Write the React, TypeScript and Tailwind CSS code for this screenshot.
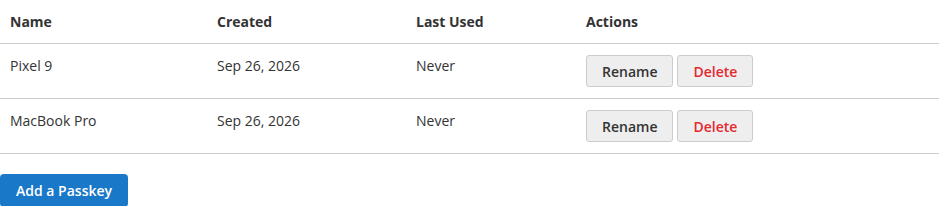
import React from "react";

const rows = [
  { name: "Pixel 9", created: "Sep 26, 2026", last: "Never" },
  { name: "MacBook Pro", created: "Sep 26, 2026", last: "Never" },
];

export default function App() {
  return (
    <div className="w-[939px] bg-white text-[14px] text-[#333]" style={{ fontFamily: '"Open Sans", sans-serif' }}>
      <table className="w-full table-fixed border-collapse">
        <colgroup>
          <col className="w-[207px]" />
          <col className="w-[199px]" />
          <col className="w-[170px]" />
          <col />
        </colgroup>
        <thead>
          <tr className="border-b border-[#ccc]">
            <th className="px-[10px] py-[11px] text-left font-bold leading-[21px]">Name</th>
            <th className="px-[10px] py-[11px] text-left font-bold leading-[21px]">Created</th>
            <th className="px-[10px] py-[11px] text-left font-bold leading-[21px]">Last Used</th>
            <th className="px-[10px] py-[11px] text-left font-bold leading-[21px]">Actions</th>
          </tr>
        </thead>
        <tbody>
          {rows.map((r) => (
            <tr key={r.name} className="border-b border-[#ccc]">
              <td className="px-[10px] py-[11px] align-top leading-[22px]">{r.name}</td>
              <td className="px-[10px] py-[11px] align-top leading-[22px]">{r.created}</td>
              <td className="px-[10px] py-[11px] align-top leading-[22px]">{r.last}</td>
              <td className="px-[10px] py-[11px] align-top">
                <div className="flex gap-[4px]">
                  <button className="h-[32px] rounded-[3px] border border-[#ccc] bg-[#eee] px-[15px] font-semibold text-[#333]">
                    Rename
                  </button>
                  <button className="h-[32px] rounded-[3px] border border-[#ccc] bg-[#eee] px-[15px] font-semibold text-[#e5292f]">
                    Delete
                  </button>
                </div>
              </td>
            </tr>
          ))}
        </tbody>
      </table>
      <div className="mt-[20px]">
        <button className="h-[33px] rounded-[4px] bg-[#1a78c8] px-[16px] font-semibold text-white">
          Add a Passkey
        </button>
      </div>
    </div>
  );
}
